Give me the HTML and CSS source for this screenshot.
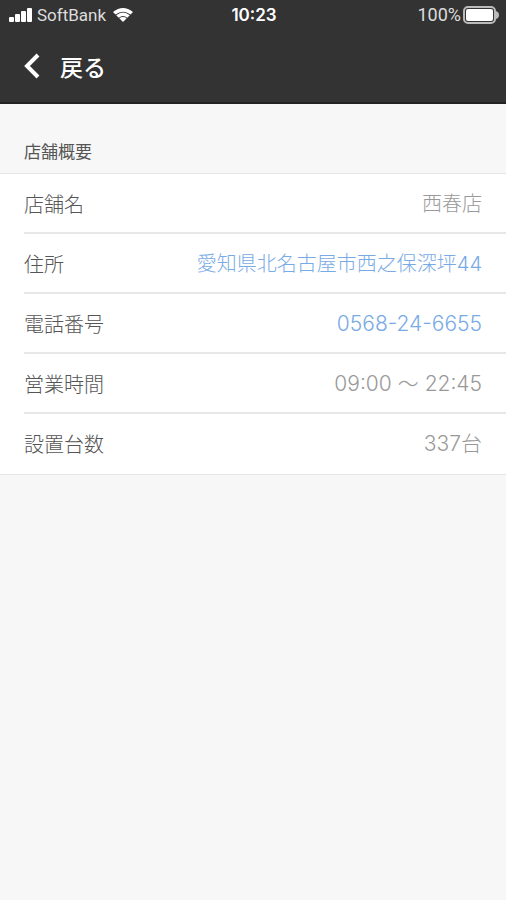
FILE: index.html
```html
<!DOCTYPE html>
<html lang="ja">
<head>
<meta charset="utf-8">
<meta name="viewport" content="width=device-width, initial-scale=1">
<title>店舗概要</title>
<link rel="stylesheet" href="styles.css">
</head>
<body>
<header class="top">
  <div class="status">
    <div class="carrier">
      <svg class="signal" viewBox="0 0 24 14" aria-hidden="true"><rect x="0" y="9" width="5" height="5" rx="1"/><rect x="6" y="6" width="5" height="8" rx="1"/><rect x="12" y="3" width="5" height="11" rx="1"/><rect x="18" y="0" width="5" height="14" rx="1"/></svg>
      <span>SoftBank</span>
      <svg class="wifi" viewBox="0 0 20 14" aria-hidden="true"><path d="M0 4Q10-4 20 4L17.5 6.5Q10 1 2.5 6.5Z"/><path d="M3.2 7.2Q10 2 16.8 7.2L14.3 9.7Q10 6.5 5.7 9.7Z"/><path d="M6.3 10.3Q10 7.5 13.7 10.3L10 14Z"/></svg>
    </div>
    <time class="clock">10:23</time>
    <div class="power">
      <span>100%</span>
      <svg class="battery" viewBox="0 0 36 18" aria-hidden="true"><rect class="shell" x="1" y="1" width="31" height="16" rx="4"/><rect x="3" y="3" width="27" height="12" rx="2"/><path class="tip" d="M33 5Q36 6 36 9T33 13Z"/></svg>
    </div>
  </div>
  <nav class="nav">
    <button class="back" type="button">
      <svg class="chevron" viewBox="0 0 16 26" aria-hidden="true"><path d="M14 2L3 13L14 24"/></svg>
      <span>戻る</span>
    </button>
  </nav>
</header>
<main>
  <h1 class="heading">店舗概要</h1>
  <dl class="list">
    <div class="row"><dt>店舗名</dt><dd>西春店</dd></div>
    <div class="row"><dt>住所</dt><dd><a href="#map">愛知県北名古屋市西之保深坪44</a></dd></div>
    <div class="row"><dt>電話番号</dt><dd class="figures"><a href="tel:0568246655">0568-24-6655</a></dd></div>
    <div class="row"><dt>営業時間</dt><dd class="figures">09:00 〜 22:45</dd></div>
    <div class="row"><dt>設置台数</dt><dd class="figures">337台</dd></div>
  </dl>
</main>
</body>
</html>
```
FILE: styles.css
```css
* { box-sizing: border-box; }
body {
  margin: 0;
  background: #f7f7f7;
  color: #555;
  font-family: "Noto Sans CJK JP", sans-serif;
  font-weight: 300;
}
.top { background: #333; color: #fff; border-bottom: 2px solid #222; }
.status {
  display: grid;
  grid-template-columns: 1fr auto 1fr;
  align-items: center;
  height: 30px;
  padding: 0 7px 0 9px;
  font: 400 17px/30px "Roboto", sans-serif;
  color: #ddd;
}
.carrier, .power { display: flex; align-items: center; }
.carrier { gap: 4px; }
.power { justify-content: flex-end; gap: 2px; font-size: 18px; }
.clock { font-family: "Inter", sans-serif; font-weight: 600; color: #fff; }
.status svg { fill: #fff; }
.signal { width: 24px; height: 14px; }
.wifi { width: 20px; height: 14px; margin-left: 3px; }
.battery { width: 36px; height: 18px; }
.status .shell { fill: none; stroke: #bbb; stroke-width: 2; }
.status .tip { fill: #bbb; }
.nav { display: flex; align-items: center; height: 72px; padding: 0 24px; }
.back {
  display: flex;
  align-items: center;
  gap: 20px;
  padding: 0;
  border: 0;
  background: none;
  color: #fff;
  font: 500 23px/32px "Noto Sans CJK JP", sans-serif;
}
.chevron { width: 16px; height: 26px; fill: none; stroke: #fff; stroke-width: 4; }
.heading { margin: 0; padding: 33px 24px 8px; font-size: 17px; line-height: 28px; font-weight: 400; }
.list { margin: 0; background: #fff; border: 1px solid #e6e6e6; border-width: 1px 0; }
.row {
  display: flex;
  justify-content: space-between;
  align-items: center;
  height: 60px;
  margin-left: 24px;
  padding: 2px 24px 0 0;
  font-size: 20px;
  line-height: 28px;
  border-bottom: 2px solid #e8e8e8;
}
.row:last-child { border-bottom-color: transparent; }
dd { margin: 0; color: #999; font-family: "Inter", "Noto Sans CJK JP", sans-serif; }
dd a { color: #78aae6; text-decoration: none; }
.figures { font-size: 21px; }
```
